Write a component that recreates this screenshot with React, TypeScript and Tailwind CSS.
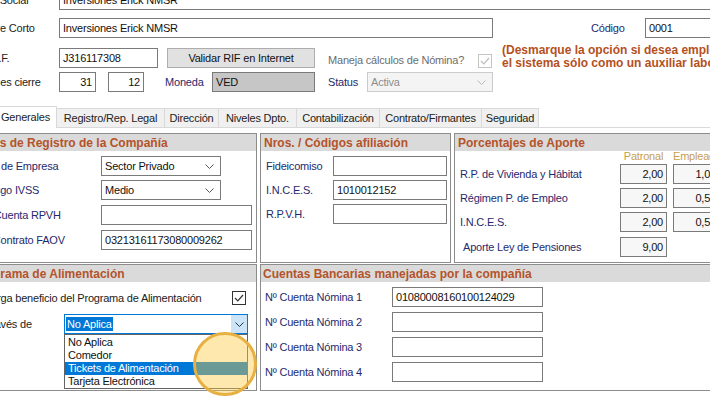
import type { ReactNode } from 'react';

const navy = 'text-[#1f2a6e]';

function Chevron({ color = '#555555' }: { color?: string }) {
  return (
    <svg width="9" height="5" viewBox="0 0 9 5" className="shrink-0">
      <path d="M0.5 0.5L4.5 4.5L8.5 0.5" fill="none" stroke={color} strokeWidth="1" />
    </svg>
  );
}

function Box({ value = '', className = '' }: { value?: string; className?: string }) {
  return (
    <div className={`flex h-[20px] shrink-0 items-center overflow-hidden whitespace-nowrap border border-[#7a7a7a] px-[3px] text-[#111] ${className}`}>
      {value}
    </div>
  );
}

function Combo({ value, className = '', muted = false }: { value: string; className?: string; muted?: boolean }) {
  return (
    <div
      className={`flex h-[20px] shrink-0 items-center justify-between border pl-[3px] pr-[6px] ${
        muted ? 'border-[#cccccc] bg-[#f4f4f4] text-[#8d8d8d]' : 'border-[#7a7a7a] bg-white text-[#111]'
      } ${className}`}
    >
      <span>{value}</span>
      <Chevron color={muted ? '#b8b8b8' : '#555555'} />
    </div>
  );
}

function Check({ disabled = false }: { disabled?: boolean }) {
  return (
    <div
      className={`flex h-[14px] w-[14px] shrink-0 items-center justify-center border bg-white ${
        disabled ? 'border-[#c4c4c4]' : 'border-[#333333]'
      }`}
    >
      <svg width="10" height="8" viewBox="0 0 10 8">
        <path d="M1 4L3.8 6.8L9 1" fill="none" stroke={disabled ? '#bcbcbc' : '#333333'} strokeWidth="1.2" />
      </svg>
    </div>
  );
}

// labels on the left edge are partly outside the window, the shift moves them there
function Label({ children, className = '', shift = '' }: { children: ReactNode; className?: string; shift?: string }) {
  return (
    <div className={`shrink-0 whitespace-nowrap ${className}`}>
      <span className={`block ${shift}`}>{children}</span>
    </div>
  );
}

function Panel({
  title,
  titleShift = '',
  className = '',
  children,
}: {
  title: string;
  titleShift?: string;
  className?: string;
  children: ReactNode;
}) {
  return (
    <section className={`flex shrink-0 flex-col border border-[#8c8c8c] bg-white ${className}`}>
      <div className="flex h-[17px] shrink-0 items-center bg-[#dadada] text-[12px] font-bold tracking-normal text-[#b4532a]">
        <span className={`block whitespace-nowrap ${titleShift}`}>{title}</span>
      </div>
      {children}
    </section>
  );
}

const tabs = [
  { label: 'Registro/Rep. Legal', w: 'w-[108px]' },
  { label: 'Dirección', w: 'w-[54px]' },
  { label: 'Niveles Dpto.', w: 'w-[78px]' },
  { label: 'Contabilización', w: 'w-[83px]' },
  { label: 'Contrato/Firmantes', w: 'w-[102px]' },
  { label: 'Seguridad', w: 'w-[57px]' },
];

const aportes = [
  { label: 'R.P. de Vivienda y Hábitat', pat: '2,00', emp: '1,00', mt: 'mt-[2px]', pl: 'pl-[5px]' },
  { label: 'Régimen P. de Empleo', pat: '2,00', emp: '0,50', mt: 'mt-[4px]', pl: 'pl-[5px]' },
  { label: 'I.N.C.E.S.', pat: '2,00', emp: '0,50', mt: 'mt-[4px]', pl: 'pl-[5px]' },
  { label: 'Aporte Ley de Pensiones', pat: '9,00', emp: null, mt: 'mt-[5px]', pl: 'pl-[8px]' },
];

const beneficios = ['No Aplica', 'Comedor', 'Tickets de Alimentación', 'Tarjeta Electrónica'];

const cuentas = ['01080008160100124029', '', '', ''];

export default function App() {
  return (
    <div className="h-[397px] w-[710px] overflow-hidden bg-white font-['Liberation_Sans',Arial,sans-serif] text-[11px] leading-none tracking-[-0.2px] text-[#222]">
      <div className="-mt-[10px] flex flex-col">
        <div className="flex h-[20px] items-center">
          <Label className="w-[59px]" shift="-ml-[34px]">Razón Social</Label>
          <Box value="Inversiones Erick NMSR" className="w-[700px] bg-white" />
        </div>

        <div className="mt-[8px] flex h-[20px] items-center">
          <Label className="w-[59px]" shift="-ml-[32px]">Nombre Corto</Label>
          <Box value="Inversiones Erick NMSR" className="w-[434px] bg-white" />
          <span className={`ml-[98px] w-[54px] shrink-0 ${navy}`}>Código</span>
          <Box value="0001" className="w-[100px] bg-white" />
        </div>

        <div className="mt-[10px] flex h-[20px] items-start">
          <Label className="flex h-[20px] w-[59px] items-center" shift="-ml-[15px]">R.I.F.</Label>
          <Box value="J316117308" className="w-[99px] bg-white" />
          <button
            type="button"
            className="ml-[9px] flex h-[20px] w-[148px] shrink-0 items-center justify-center border border-[#adadad] bg-[#e1e1e1] text-[#111]"
          >
            Validar RIF en Internet
          </button>
          <span className="ml-[13px] mt-[7px] w-[150px] shrink-0 whitespace-nowrap text-[#6d6d6d]">Maneja cálculos de Nómina?</span>
          <div className="mt-[6px]">
            <Check disabled />
          </div>
          <div className="-mt-[4px] ml-[10px] whitespace-nowrap text-[12px] font-bold leading-[13px] tracking-normal text-[#b4501e]">
            <div>(Desmarque la opción si desea emplear</div>
            <div>el sistema sólo como un auxiliar laboral)</div>
          </div>
        </div>

        <div className="mt-[4px] flex h-[20px] items-center">
          <Label className="w-[59px]" shift="-ml-[28px]">Día/Mes cierre</Label>
          <Box value="31" className="w-[37px] justify-end bg-white" />
          <Box value="12" className="ml-[12px] w-[36px] justify-end bg-white" />
          <span className={`ml-[21px] w-[47px] shrink-0 ${navy}`}>Moneda</span>
          <Box value="VED" className="w-[103px] bg-[#c6c6c6]" />
          <span className={`ml-[13px] w-[39px] shrink-0 ${navy}`}>Status</span>
          <Combo value="Activa" muted className="w-[126px]" />
        </div>

        <div className="mt-[14px] flex h-[22px] items-end border-b border-[#d9d9d9]">
          <div className="-mb-px -ml-[6px] flex h-[22px] w-[63px] shrink-0 items-center justify-center border-x border-t border-[#d9d9d9] bg-white">
            Generales
          </div>
          {tabs.map((tab) => (
            <div
              key={tab.label}
              className={`flex h-[19px] shrink-0 items-center justify-center border-r border-t border-[#d9d9d9] bg-[#f0f0f0] ${tab.w}`}
            >
              {tab.label}
            </div>
          ))}
        </div>

        <div className="mt-[5px] flex h-[130px]">
          <Panel className="-ml-[3px] w-[260px]" title="Datos de Registro de la Compañía" titleShift="-ml-[25px]">
            <div className="mt-[5px] flex h-[20px] items-center">
              <Label className={`w-[103px] ${navy}`} shift="-ml-[20px]">Tipo de Empresa</Label>
              <Combo value="Sector Privado" className="w-[120px]" />
            </div>
            <div className="mt-[4px] flex h-[20px] items-center">
              <Label className={`w-[103px] ${navy}`} shift="-ml-[19px]">Riesgo IVSS</Label>
              <Combo value="Medio" className="w-[120px]" />
            </div>
            <div className="mt-[5px] flex h-[20px] items-center">
              <Label className={`w-[103px] ${navy}`} shift="-ml-[27px]">Nro. Cuenta RPVH</Label>
              <Box className="w-[151px] bg-white" />
            </div>
            <div className="mt-[5px] flex h-[20px] items-center">
              <Label className={`w-[103px] ${navy}`} shift="-ml-[28px]">Nro. Contrato FAOV</Label>
              <Box value="03213161173080009262" className="w-[151px] bg-white" />
            </div>
          </Panel>

          <Panel className="ml-[3px] w-[191px]" title="Nros. / Códigos afiliación" titleShift="pl-[3px]">
            <div className="mt-[5px] flex h-[20px] items-center">
              <Label className={`w-[72px] pl-[5px] ${navy}`}>Fideicomiso</Label>
              <Box className="w-[114px] bg-white" />
            </div>
            <div className="mt-[4px] flex h-[20px] items-center">
              <Label className={`w-[72px] pl-[5px] ${navy}`}>I.N.C.E.S.</Label>
              <Box value="1010012152" className="w-[114px] bg-white" />
            </div>
            <div className="mt-[4px] flex h-[20px] items-center">
              <Label className={`w-[72px] pl-[5px] ${navy}`}>R.P.V.H.</Label>
              <Box className="w-[114px] bg-white" />
            </div>
          </Panel>

          <Panel className="ml-[3px] w-[300px]" title="Porcentajes de Aporte" titleShift="pl-[3px]">
            <div className="flex h-[11px] items-center text-[#c8a04a]">
              <div className="w-[165px] shrink-0" />
              <span className="w-[47px] shrink-0 text-center">Patronal</span>
              <span className="ml-[6px] w-[47px] shrink-0 text-center">Empleado</span>
            </div>
            {aportes.map((row) => (
              <div key={row.label} className={`${row.mt} flex h-[20px] items-center`}>
                <Label className={`w-[165px] ${row.pl} ${navy}`}>{row.label}</Label>
                <Box value={row.pat} className="w-[47px] justify-end bg-[#f7f7f7]" />
                {row.emp && <Box value={row.emp} className="ml-[6px] w-[47px] justify-end bg-[#f7f7f7]" />}
              </div>
            ))}
          </Panel>
        </div>

        <div className="mt-[1px] flex h-[127px]">
          <Panel className="-ml-[3px] w-[260px]" title="Programa de Alimentación" titleShift="-ml-[25px]">
            <div className="mt-[9px] flex h-[14px] items-center">
              <Label className="w-[234px]" shift="-ml-[18px]">Otorga beneficio del Programa de Alimentación</Label>
              <Check />
            </div>
            <div className="mt-[9px] flex h-[20px] items-center">
              <Label className="w-[66px]" shift="-ml-[19px]">A través de</Label>
              <div className="relative w-[184px] shrink-0">
                <div className="flex h-[20px] items-stretch border border-[#0078d7] bg-white">
                  <div className="flex flex-1 items-center pl-[1px]">
                    <span className="flex h-[14px] items-center bg-[#0078d7] px-[1px] text-white">No Aplica</span>
                  </div>
                  <div className="flex w-[16px] items-center justify-center bg-[#cce4f7]">
                    <Chevron color="#333333" />
                  </div>
                </div>
                <div className="absolute left-0 top-full w-full border border-[#646464] bg-white pt-[1px]">
                  {beneficios.map((item) => (
                    <div
                      key={item}
                      className={`flex h-[13px] items-center pl-[3px] ${
                        item === 'Tickets de Alimentación' ? 'bg-[#0078d7] text-white' : 'text-[#111]'
                      }`}
                    >
                      {item}
                    </div>
                  ))}
                </div>
                {/* highlight ring from the screen recording */}
                <div className="pointer-events-none absolute left-[129px] top-[18px] h-[64px] w-[64px] rounded-full border-[3px] border-[#e6b042] bg-[rgba(255,200,60,0.42)]" />
              </div>
            </div>
          </Panel>

          <Panel className="ml-[3px] w-[460px]" title="Cuentas Bancarias manejadas por la compañía" titleShift="pl-[2px]">
            {cuentas.map((value, i) => (
              <div key={i} className="mt-[5px] flex h-[20px] items-center">
                <Label className={`w-[131px] pl-[4px] ${navy}`}>Nº Cuenta Nómina {i + 1}</Label>
                <Box value={value} className="w-[151px] bg-white" />
              </div>
            ))}
          </Panel>
        </div>
      </div>
    </div>
  );
}
